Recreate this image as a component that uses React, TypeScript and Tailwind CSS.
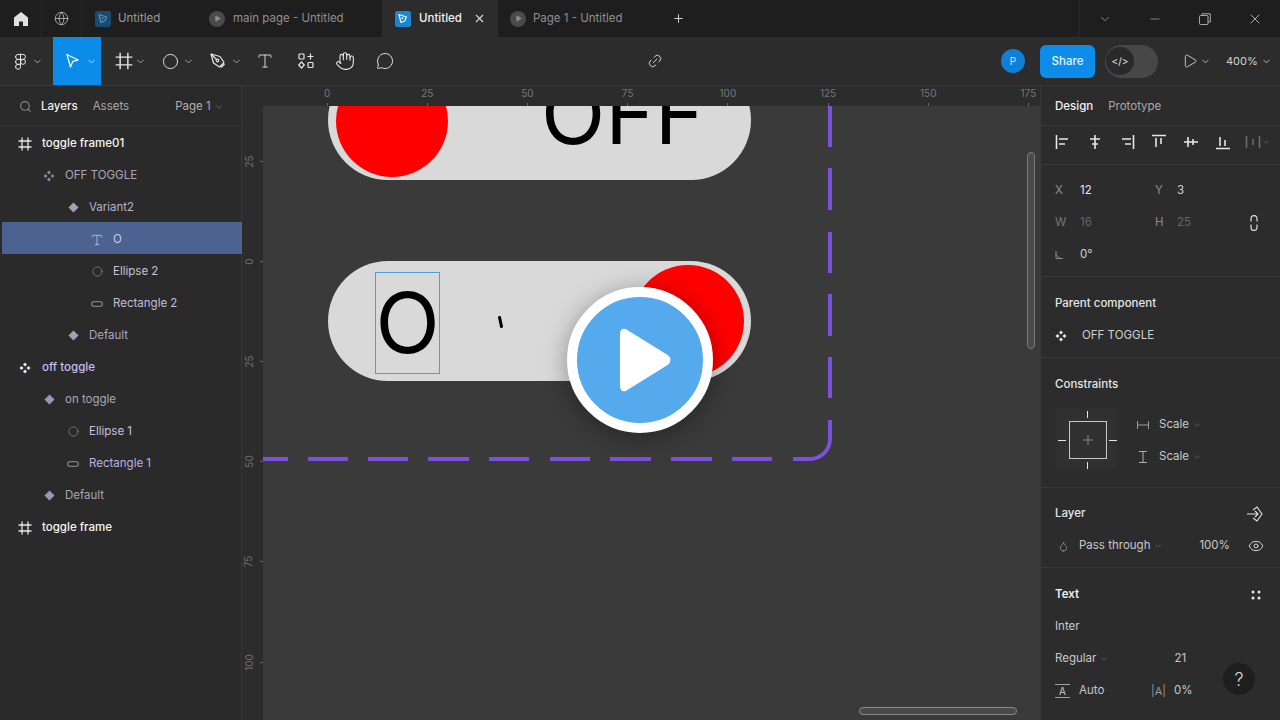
import React from "react";
import { ChevronDown, Circle, Droplet, Eye, Figma, Globe, Hand, Link2, MessageCircle, Minus, Play, Plus, Search, Type, X } from "lucide-react";

const Chev = ({ c = "#bdbdbd", s = 11 }: { c?: string; s?: number }) => <ChevronDown size={s} color={c} strokeWidth={1.8} />;

const FrameIcon = ({ s = 14, c = "#e8e8e8", w = 1.3 }: { s?: number; c?: string; w?: number }) => (
  <svg width={s} height={s} viewBox="0 0 14 14" fill="none" stroke={c} strokeWidth={w}>
    <path d="M4 0.5V13.5M10 0.5V13.5M0.5 4H13.5M0.5 10H13.5" />
  </svg>
);

const ComponentIcon = ({ c, s = 12 }: { c: string; s?: number }) => (
  <svg width={s} height={s} viewBox="0 0 12 12" fill={c}>
    <path d="M6 0.5 8 2.5 6 4.5 4 2.5Z M2.5 4 4.5 6 2.5 8 0.5 6Z M9.5 4 11.5 6 9.5 8 7.5 6Z M6 7.5 8 9.5 6 11.5 4 9.5Z" />
  </svg>
);

const DiamondIcon = ({ c }: { c: string }) => (
  <svg width={11} height={11} viewBox="0 0 11 11" fill={c}>
    <path d="M5.5 0.5 10.5 5.5 5.5 10.5 0.5 5.5Z" />
  </svg>
);

const RectIcon = () => (
  <svg width={12} height={6} viewBox="0 0 12 6" fill="none" stroke="#7f7f7f" strokeWidth={1.2}>
    <rect x={0.6} y={0.6} width={10.8} height={4.8} rx={2.4} />
  </svg>
);

const LogoTab = ({ c, l }: { c: string; l: string }) => (
  <svg width={16} height={16} viewBox="0 0 16 16">
    <rect width={16} height={16} rx={2.5} fill={c} />
    <path d="M4 3.5 11.5 6 9.8 9.8 6 11.5Z" fill="none" stroke={l} strokeWidth={1.2} strokeLinejoin="round" />
    <circle cx={7.5} cy={7.3} r={1} fill={l} />
  </svg>
);

const PlayTab = () => (
  <div className="flex h-[16px] w-[16px] items-center justify-center rounded-full bg-[#4a4a4a]">
    <Play size={7} fill="#8a8a8a" color="#8a8a8a" />
  </div>
);

const ComponentsTool = () => (
  <svg width={18} height={18} viewBox="0 0 18 18" fill="none" stroke="#e6e6e6" strokeWidth={1.2}>
    <rect x={2} y={2} width={5} height={5} rx={0.8} />
    <path d="M13.5 1.5v6M10.5 4.5h6" />
    <path d="M4.5 10 7.3 13 4.5 16 1.7 13Z" />
    <rect x={11} y={10.5} width={5} height={5} rx={0.8} />
  </svg>
);

const Align = ({ d, dim }: { d: string; dim?: boolean }) => (
  <svg width={16} height={16} viewBox="0 0 16 16" fill="none" stroke={dim ? "#6c6c6c" : "#e6e6e6"} strokeWidth={1.6}>
    <path d={d} />
  </svg>
);

const layers = [
  { t: "toggle frame01", x: 25, tx: 42, k: "frame", c: "#f5f5f5", w: "font-medium" },
  { t: "OFF TOGGLE", x: 49, tx: 65, k: "comp", c: "#a9a6b8", ic: "#8d84a8" },
  { t: "Variant2", x: 73, tx: 89, k: "dia", c: "#b5b0c8", ic: "#a49fb4" },
  { t: "O", x: 97, tx: 113, k: "text", c: "#c7cfe3", sel: true },
  { t: "Ellipse 2", x: 97, tx: 113, k: "ell", c: "#c6c2d4" },
  { t: "Rectangle 2", x: 97, tx: 113, k: "rect", c: "#c2bed8" },
  { t: "Default", x: 73, tx: 89, k: "dia", c: "#a9a3c6", ic: "#a49fb4" },
  { t: "off toggle", x: 25, tx: 42, k: "comp", c: "#c8bdf2", ic: "#eeeaf8", w: "font-medium" },
  { t: "on toggle", x: 49, tx: 65, k: "dia", c: "#a8a6b4", ic: "#9b93b8" },
  { t: "Ellipse 1", x: 73, tx: 89, k: "ell", c: "#c6c0e0" },
  { t: "Rectangle 1", x: 73, tx: 89, k: "rect", c: "#b8b2e0" },
  { t: "Default", x: 49, tx: 65, k: "dia", c: "#a8a3bc", ic: "#9b93b8" },
  { t: "toggle frame", x: 25, tx: 42, k: "frame", c: "#f5f5f5", w: "font-medium" },
];

const LayerIcon = ({ k, ic }: { k: string; ic?: string }) => {
  if (k === "frame") return <FrameIcon />;
  if (k === "comp") return <ComponentIcon c={ic || "#aaa"} />;
  if (k === "dia") return <DiamondIcon c={ic || "#aaa"} />;
  if (k === "text") return <Type size={14} color="#c7cfe3" strokeWidth={1.3} />;
  if (k === "ell") return <Circle size={11} color="#7f7f7f" strokeWidth={1.8} />;
  return <RectIcon />;
};

const Section = ({ children, h }: { children: React.ReactNode; h: string }) => (
  <div className={`border-b border-[#383838] pl-[14px] pr-[15px] ${h}`}>{children}</div>
);

export default function App() {
  return (
    <div className="relative flex h-[720px] w-[1280px] flex-col overflow-hidden bg-[#2c2c2c] text-[11.5px] font-['Inter',sans-serif] text-[#e6e6e6]">
      {/* tabs */}
      <div className="flex h-[37px] shrink-0 items-center bg-[#1e1e1e]">
        <div className="flex h-full w-[42px] items-center justify-center border-r border-[#262626]">
          <svg width={16} height={16} viewBox="0 0 16 16" fill="#e0e0e0">
            <path d="M8 1 15 6.5V15H10V10.5H6V15H1V6.5Z" />
          </svg>
        </div>
        <div className="flex h-full w-[40px] items-center justify-center border-r border-[#262626]">
          <Globe size={15} color="#c8c8c8" strokeWidth={1.2} />
        </div>
        <div className="flex h-full w-[114px] items-center pl-[13px]">
          <LogoTab c="#1a4a70" l="#5f8fb4" />
          <span className="ml-[7px] text-[#9a9a9a]">Untitled</span>
        </div>
        <div className="flex h-full w-[186px] items-center pl-[13px]">
          <PlayTab />
          <span className="ml-[8px] text-[#8f8f8f]">main page - Untitled</span>
        </div>
        <div className="flex h-full w-[116px] items-center bg-[#2c2c2c] pl-[13px]">
          <LogoTab c="#1a86d0" l="#e8f6ff" />
          <span className="ml-[8px] font-medium text-[#f0f0f0]">Untitled</span>
          <X size={13} color="#d8d8d8" className="ml-[11px]" />
        </div>
        <div className="flex h-full w-[172px] items-center pl-[12px]">
          <PlayTab />
          <span className="ml-[7px] text-[#8f8f8f]">Page 1 - Untitled</span>
        </div>
        <Plus size={13} color="#d0d0d0" strokeWidth={2} className="ml-[2px]" />
        <div className="ml-auto flex h-full items-center border-l border-[#2a2a2a]">
          <div className="flex w-[50px] justify-center"><ChevronDown size={14} color="#9c9c9c" strokeWidth={1.4} /></div>
          <div className="flex w-[50px] justify-center"><Minus size={14} color="#9c9c9c" strokeWidth={1.4} /></div>
          <div className="flex w-[50px] justify-center">
            <svg width={12} height={12} viewBox="0 0 12 12" fill="none" stroke="#a8a8a8" strokeWidth={1}>
              <rect x={0.5} y={2.5} width={8.5} height={9} rx={1} />
              <path d="M3 2.5V0.8H11.3V9H9" />
            </svg>
          </div>
          <div className="flex w-[50px] justify-center"><X size={16} color="#c0c0c0" strokeWidth={1.3} /></div>
        </div>
      </div>

      {/* toolbar */}
      <div className="flex h-[49px] shrink-0 items-center border-b border-[#383838] bg-[#2c2c2c]">
        <div className="flex w-[53px] items-center gap-[2.5px] pl-[12px]">
          <Figma size={17} color="#e6e6e6" strokeWidth={1.4} />
          <Chev />
        </div>
        <div className="flex h-full w-[48px] items-center gap-[6px] bg-[#0c8ce9] pl-[12px]">
          <svg width={15} height={16} viewBox="0 0 15 16" fill="none" stroke="#e8f6ff" strokeWidth={1.3} strokeLinejoin="round">
            <path d="M2 1.5 13 7 7.8 8.4 5.5 14Z" />
          </svg>
          <Chev c="#d6efff" />
        </div>
        <div className="flex w-[47px] items-center gap-[1.5px] pl-[14px]"><FrameIcon s={18} c="#e6e6e6" w={1.1} /><Chev /></div>
        <div className="flex w-[47px] items-center gap-[4px] pl-[13.5px]"><Circle size={17} color="#e6e6e6" strokeWidth={1.3} /><Chev /></div>
        <div className="flex w-[50px] items-center gap-[4px] pl-[14.5px]">
          <svg width={17} height={17} viewBox="0 0 17 17" fill="none" stroke="#e6e6e6" strokeWidth={1.2} strokeLinejoin="round">
            <path d="M1 1 10 3.5 14 9.5 9.5 14 3.5 10Z" />
            <path d="M1 1 6.5 6.5" />
            <circle cx={7.5} cy={7.5} r={1.3} />
            <path d="M11 14.5 14.5 11" />
          </svg>
          <Chev />
        </div>
        <div className="flex w-[40px] justify-center"><Type size={18} color="#e6e6e6" strokeWidth={1.2} /></div>
        <div className="flex w-[40px] justify-center pl-[2px]"><ComponentsTool /></div>
        <div className="flex w-[40px] justify-center"><Hand size={20} color="#e6e6e6" strokeWidth={1.3} /></div>
        <div className="flex w-[40px] justify-center"><MessageCircle size={18} color="#e6e6e6" strokeWidth={1.3} /></div>
        <Link2 size={16} color="#d0d0d0" strokeWidth={1.4} className="ml-[242px] -rotate-45" />
        <div className="ml-auto mr-[8px] flex items-center">
          <div className="flex h-[24px] w-[24px] items-center justify-center rounded-full bg-[#0f7fd6] text-[10px] text-[#cfeaff]">P</div>
          <div className="ml-[15px] flex h-[33px] w-[55px] items-center justify-center rounded-[6px] bg-[#0d8de9] pt-[1px] font-medium text-[#e4f5ff]">Share</div>
          <div className="ml-[10px] flex h-[33px] w-[53px] items-center rounded-full bg-[#474747] pl-[1px]">
            <div className="flex h-[28px] w-[28px] items-center justify-center rounded-full bg-[#2a2a2a] text-[10px] text-[#e0e0e0]">&lt;/&gt;</div>
          </div>
          <Play size={16} color="#d8d8d8" strokeWidth={1.3} className="ml-[24px]" />
          <div className="ml-[2px]"><Chev c="#d0d0d0" /></div>
          <span className="ml-[15px] w-[32px] text-[11px] text-[#cfcfcf]">400%</span>
          <div className="ml-[3px]"><Chev c="#d0d0d0" /></div>
        </div>
      </div>

      <div className="flex min-h-0 flex-1">
        {/* left */}
        <div className="flex w-[242px] shrink-0 flex-col border-r border-[#383838] bg-[#2a2a2a]">
          <div className="flex h-[40px] shrink-0 items-center border-b border-[#343434] pt-[2px]">
            <Search size={13} color="#8a8a8a" className="ml-[19px]" />
            <span className="ml-[9px] font-medium text-[#eeeeee]">Layers</span>
            <span className="ml-[15px] text-[#a8a8a8]">Assets</span>
            <span className="ml-[46px] text-[#b0b0b0]">Page 1</span>
            <div className="ml-[3px]"><Chev c="#777" s={10} /></div>
          </div>
          <div>
            {layers.map((l, i) => (
              <div key={i} className={`flex h-[32px] items-center pt-[3px] ${l.sel ? "ml-[2px] mr-[-1px] bg-[#4c6290]" : ""}`}>
                <div className="flex w-[16px] shrink-0 items-center justify-center" style={{ marginLeft: l.x - 8 - (l.sel ? 2 : 0) }}>
                  <LayerIcon k={l.k} ic={l.ic} />
                </div>
                <span className={`whitespace-nowrap ${l.w || ""}`} style={{ color: l.c, marginLeft: l.tx - l.x - 8 }}>{l.t}</span>
              </div>
            ))}
          </div>
        </div>

        {/* center */}
        <div className="flex min-w-0 flex-1 flex-col">
          <div className="flex h-[20px] shrink-0 bg-[#2c2c2c] pl-[35px]">
            {["0", "25", "50", "75", "100", "125", "150", "175"].map((n) => (
              <div key={n} className="flex w-[100.2px] shrink-0 flex-col items-center justify-between">
                <span className="text-[10px] leading-[14px] text-[#777777]">{n}</span>
                <div className="h-[3px] w-[1px] bg-[#666666]" />
              </div>
            ))}
          </div>
          <div className="flex min-h-0 flex-1">
            <div className="flex w-[21px] shrink-0 flex-col bg-[#2c2c2c] pt-[5px]">
              {["25", "0", "25", "50", "75", "100"].map((n, i) => (
                <div key={i} className="flex h-[100.2px] shrink-0 items-center">
                  <div className="flex w-[14px] justify-center">
                    <span className="-rotate-90 text-[10px] text-[#6f6f6f]">{n}</span>
                  </div>
                  <div className="ml-auto h-[1px] w-[3px] bg-[#666666]" />
                </div>
              ))}
            </div>
            <div className="relative min-w-0 flex-1 overflow-hidden bg-[#3a3a3a]">
              {/* first toggle */}
              <div className="absolute left-[65px] top-[-46px] h-[120px] w-[423px] rounded-[60px] bg-[#d9d9d9]" />
              <div className="absolute left-[73px] top-[-41px] h-[112px] w-[112px] rounded-full bg-[#ff0000]" />
              <div className="absolute left-[278px] top-[-42px] text-[84px] leading-[100px] text-black">OFF</div>
              {/* second toggle */}
              <div className="absolute left-[65px] top-[155px] h-[120px] w-[423px] rounded-[60px] bg-[#d9d9d9]" />
              <div className="absolute left-[369px] top-[159px] h-[112px] w-[112px] rounded-full bg-[#ff0000]" />
              <div className="absolute left-[112px] top-[166px] flex h-[102px] w-[65px] items-center justify-center border border-[#4aa0d8] text-[84px] leading-[100px] text-black">O</div>
              <div className="absolute left-[236px] top-[210px] h-[12px] w-[3px] rotate-[-12deg] rounded-[1px] bg-black" />
              {/* frame dashes */}
              <svg className="absolute left-0 top-0" width={777} height={400} fill="none" stroke="#7c4fdc" strokeWidth={4}>
                <g transform="translate(-263 -106)">
                  {[[106, 147], [168, 210], [232, 273], [294, 336], [357, 398]].map(([a, b]) => (
                    <path key={a} d={`M830 ${a}V${b}`} />
                  ))}
                  {[[263, 288], [308, 348], [368, 408], [428, 469], [489, 529], [550, 590], [610, 651], [671, 712], [732, 772]].map(([a, b]) => (
                    <path key={a} d={`M${a} 459H${b}`} />
                  ))}
                  <path d="M793 459H810A20 20 0 0 0 830 439V420" />
                </g>
              </svg>
              {/* scrollbars */}
              <div className="absolute left-[764px] top-[46px] h-[197px] w-[8px] rounded-full border border-[#7a7a7a] bg-[#4a4a4a]" />
              <div className="absolute left-[596px] top-[601px] h-[8px] w-[158px] rounded-full border border-[#8a8a8a] bg-[#4a4a4a]" />
            </div>
          </div>
        </div>

        {/* right */}
        <div className="flex w-[240px] shrink-0 flex-col overflow-hidden border-l border-[#383838] bg-[#2c2c2c]">
          <div className="flex h-[40px] shrink-0 items-center border-b border-[#383838] pl-[14px] pt-[2px]">
            <span className="font-medium text-[#f0f0f0]">Design</span>
            <span className="ml-[15px] text-[#a8a8a8]">Prototype</span>
          </div>
          <div className="flex h-[39px] shrink-0 items-center justify-between border-b border-[#383838] pb-[6px] pl-[14px] pr-[9px]">
            <div className="flex w-[176px] justify-between">
              <Align d="M1.5 1v14M4 5h9M4 10h6" />
              <Align d="M8 1v14M3 5h10M5 10h6" />
              <Align d="M14.5 1v14M3 5h9M6 10h6" />
              <Align d="M1 1.5h14M5 4v9M10 4v6" />
              <Align d="M1 8h14M5 3v10M10 5v6" />
              <Align d="M1 14.5h14M5 3v9M10 6v6" />
            </div>
            <div className="flex items-center">
              <Align dim d="M1.5 2v12M14.5 2v12M8 5v6" />
              <Chev c="#666" s={10} />
            </div>
          </div>
          <Section h="h-[112px] shrink-0 pt-[10px]">
            <div className="flex h-[32px] items-center">
              <span className="w-[25px] text-[#8c8c8c]">X</span><span className="w-[75px] text-[#e6e6e6]">12</span>
              <span className="w-[22px] text-[#8c8c8c]">Y</span><span className="text-[#cfcfcf]">3</span>
            </div>
            <div className="flex h-[32px] items-center">
              <span className="w-[25px] text-[#777]">W</span><span className="w-[75px] text-[#666]">16</span>
              <span className="w-[22px] text-[#8c8c8c]">H</span><span className="text-[#666]">25</span>
              <svg className="ml-[58px]" width={10} height={16} viewBox="0 0 10 16" fill="none" stroke="#cfcfcf" strokeWidth={1.3}>
                <path d="M2 6.5V3.5a3 3 0 0 1 6 0V6.5M2 9.5V12.5a3 3 0 0 0 6 0V9.5" />
              </svg>
            </div>
            <div className="flex h-[32px] items-center">
              <svg className="mr-[17px]" width={8} height={8} viewBox="0 0 8 8" fill="none" stroke="#8c8c8c" strokeWidth={1}>
                <path d="M1 0v7.5H8M1 3.5 5 7.5" />
              </svg>
              <span className="text-[#d0d0d0]">0°</span>
            </div>
          </Section>
          <Section h="h-[81px] shrink-0 pt-[17px]">
            <div className="font-medium leading-[18px] text-[#e6e6e6]">Parent component</div>
            <div className="mt-[15px] flex items-center">
              <ComponentIcon c="#e6e6e6" />
              <span className="ml-[15px] text-[#cfcfcf]">OFF TOGGLE</span>
            </div>
          </Section>
          <Section h="h-[130px] shrink-0 pt-[17px]">
            <div className="font-medium leading-[18px] text-[#e6e6e6]">Constraints</div>
            <div className="mt-[15px] flex items-start">
              <div className="relative h-[62px] w-[62px] shrink-0 bg-[#303030]">
                <div className="absolute left-[14px] top-[13px] flex h-[38px] w-[38px] items-center justify-center border border-[#c8c8c8]">
                  <Plus size={16} color="#b0b0b0" strokeWidth={1} />
                </div>
                <div className="absolute left-[32px] top-[3px] h-[7px] w-[1px] bg-[#e8e8e8]" />
                <div className="absolute left-[32px] top-[54px] h-[7px] w-[1px] bg-[#e8e8e8]" />
                <div className="absolute left-[3px] top-[32px] h-[1px] w-[8px] bg-[#e8e8e8]" />
                <div className="absolute left-[54px] top-[32px] h-[1px] w-[8px] bg-[#e8e8e8]" />
              </div>
              <div className="ml-[20px] flex flex-col pt-[1px] text-[#c8c8c8]">
                <div className="flex h-[32px] items-center">
                  <svg width={12} height={8} viewBox="0 0 12 8" fill="none" stroke="#9a9a9a" strokeWidth={1}>
                    <path d="M.5 0v8M11.5 0v8M.5 4h11" />
                  </svg>
                  <span className="ml-[10px]">Scale</span>
                  <div className="ml-[3px]"><Chev c="#666" s={10} /></div>
                </div>
                <div className="flex h-[32px] items-center">
                  <svg className="mx-[2px]" width={8} height={12} viewBox="0 0 8 12" fill="none" stroke="#b0b0b0" strokeWidth={1}>
                    <path d="M0 .5h8M0 11.5h8M4 .5v11" />
                  </svg>
                  <span className="ml-[10px]">Scale</span>
                  <div className="ml-[3px]"><Chev c="#666" s={10} /></div>
                </div>
              </div>
            </div>
          </Section>
          <Section h="h-[80px] shrink-0 pt-[17px]">
            <div className="flex h-[18px] items-center justify-between pr-[1px]">
              <span className="font-medium text-[#e6e6e6]">Layer</span>
              <svg width={18} height={16} viewBox="0 0 18 16" fill="none" stroke="#e0e0e0" strokeWidth={1.1}>
                <path d="M1 8h11M9 5l3 3-3 3M7 4 11 1l5 7-5 7-4-3" />
              </svg>
            </div>
            <div className="mt-[14px] flex h-[18px] items-center pr-[1px]">
              <Droplet size={11} color="#a8a8a8" strokeWidth={1.4} className="ml-[3px]" />
              <span className="ml-[10px] text-[#c8c8c8]">Pass through</span>
              <div className="ml-[3px]"><Chev c="#666" s={10} /></div>
              <span className="ml-[36px] text-[#c8c8c8]">100%</span>
              <Eye size={16} color="#e0e0e0" strokeWidth={1.4} className="ml-auto" />
            </div>
          </Section>
          <div className="flex flex-col pl-[14px] pr-[19px] pt-[18px]">
            <div className="flex h-[18px] items-center justify-between">
              <span className="font-semibold text-[#eeeeee]">Text</span>
              <svg width={10} height={10} viewBox="0 0 10 10" fill="#e6e6e6">
                <circle cx={2} cy={2} r={1.5} /><circle cx={8} cy={2} r={1.5} /><circle cx={2} cy={8} r={1.5} /><circle cx={8} cy={8} r={1.5} />
              </svg>
            </div>
            <div className="mt-[14px] flex h-[18px] items-center text-[#c8c8c8]">Inter</div>
            <div className="mt-[14px] flex h-[18px] items-center text-[#c8c8c8]">
              <span>Regular</span>
              <div className="ml-[3px]"><Chev c="#666" s={10} /></div>
              <span className="ml-[65px]">21</span>
            </div>
            <div className="mt-[14px] flex h-[18px] items-center text-[#c8c8c8]">
              <span className="flex h-[14px] w-[15px] items-center justify-center border-y border-[#a0a0a0] text-[10px] leading-none">A</span>
              <span className="ml-[9px] w-[72px]">Auto</span>
              <span className="w-[23px] text-[11px] text-[#9a9a9a]">|A|</span>
              <span>0%</span>
            </div>
            <div className="mt-[20px] flex h-[18px] items-center">
              <div className="h-[14px] w-[15px] border-t border-[#a0a0a0]" />
              <div className="ml-[76px] h-[18px] w-[26px] rounded-[3px] bg-[#3c3c3c]" />
              <div className="ml-[8px] h-[6px] w-[14px] border-t border-[#c0c0c0]" />
              <div className="ml-[8px] h-[10px] w-[12px] border border-[#c0c0c0]" />
            </div>
          </div>
        </div>
      </div>

      {/* video play overlay */}
      <div className="absolute left-[567px] top-[287px] flex h-[146px] w-[146px] items-center justify-center rounded-full border-[10px] border-white bg-[#55aaee] shadow-[0_4px_24px_rgba(0,0,0,0.35)]">
        <svg width={56} height={70} viewBox="0 0 56 70" className="ml-[12px]">
          <path d="M7 6 49 32Q52 35 49 38L7 64Q4 65 4 61V9Q4 5 7 6Z" fill="#ffffff" stroke="#ffffff" strokeWidth={4} strokeLinejoin="round" />
        </svg>
      </div>
      {/* help */}
      <div className="absolute left-[1223px] top-[663px] flex h-[32px] w-[32px] items-center justify-center rounded-full bg-[#1e1e1e] text-[18px] font-light text-[#d8d8d8]">?</div>
    </div>
  );
}
